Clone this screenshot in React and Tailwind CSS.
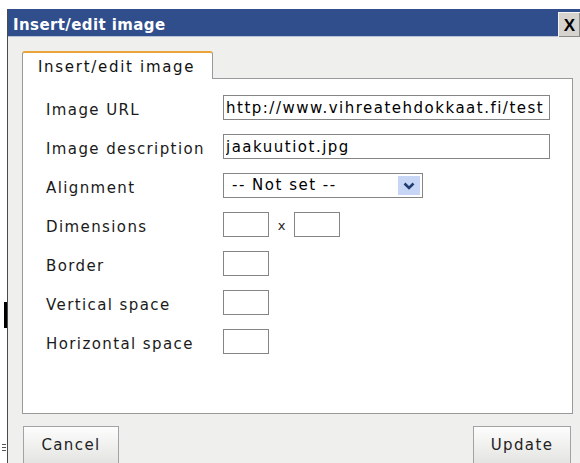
import React, { useState } from 'react';

const label = "h-[25px] pt-[5px] leading-[20px] font-['DejaVu_Sans',sans-serif] text-[15px] tracking-[1.4px] text-[#1a1a1a]";
const box = "h-[25px] border border-[#858585] bg-white";

const Field = ({ value, onChange, className }) => (
    <input
        type="text"
        value={value}
        onChange={(e) => onChange(e.target.value)}
        className={`${box} ${className} px-[2px] font-['DejaVu_Sans',sans-serif] text-[15px] tracking-[1.5px] text-black outline-none`}
    />
);

const App = () => {
    const [src, setSrc] = useState('http://www.vihreatehdokkaat.fi/test');
    const [alt, setAlt] = useState('jaakuutiot.jpg');
    const [width, setWidth] = useState('');
    const [height, setHeight] = useState('');
    const [border, setBorder] = useState('');
    const [vspace, setVspace] = useState('');
    const [hspace, setHspace] = useState('');

    return (
        <div className="flex h-[463px] w-[580px] overflow-hidden bg-white">
            {/* strip of the page behind the popup */}
            <div className="relative w-[7px]">
                <div className="absolute left-[4px] top-[302px] h-[26px] w-[3px] bg-black" />
                <div className="absolute left-[2px] top-[444px] h-px w-[4px] bg-[#555]" />
                <div className="absolute left-[2px] top-[447px] h-px w-[4px] bg-[#555]" />
                <div className="absolute left-[2px] top-[450px] h-px w-[4px] bg-[#555]" />
            </div>

            <div className="flex flex-1 flex-col pt-[9px]">
                <div className="flex flex-1 flex-col border-l border-[#4a4a4a] bg-[#efefed]">
                    {/* title bar */}
                    <div className="flex h-[28px] items-start justify-between border-b border-[#b9c3d6] bg-[#304e8c]">
                        <span className="mt-[5px] pl-[5px] font-['DejaVu_Sans',sans-serif] text-[15px] font-bold tracking-[0.4px] text-white">
                            Insert/edit image
                        </span>
                        <button
                            type="button"
                            className="mt-[3px] flex h-[25px] w-[22px] items-center justify-center border-l border-t border-[#f4f4f2] bg-[#d6d3ce] font-['Liberation_Sans',sans-serif] text-[17px] font-bold leading-none text-black shadow-[inset_-1px_-1px_0_#8a8a86]"
                        >
                            X
                        </button>
                    </div>

                    <div className="flex flex-1 flex-col pl-[14px] pr-[7px]">
                        {/* tab */}
                        <div className="relative z-10 -mb-px mt-[14px] flex h-[28px] w-[191px] items-center rounded-t-[3px] border-x border-t-2 border-[#9a9a9a] border-t-[#eaa53a] bg-white pl-[15px] pt-[3px]">
                            <span className="font-['DejaVu_Sans',sans-serif] text-[15px] tracking-[1.7px] text-[#111]">
                                Insert/edit image
                            </span>
                        </div>

                        {/* panel */}
                        <div className="h-[336px] border border-[#9a9a9a] bg-white pl-[23px] pt-[16px]">
                            <div className="grid grid-cols-[177px_1fr] items-center gap-y-[14px]">
                                <span className={label}>Image URL</span>
                                <Field value={src} onChange={setSrc} className="w-[327px]" />

                                <span className={label}>Image description</span>
                                <Field value={alt} onChange={setAlt} className="w-[327px]" />

                                <span className={label}>Alignment</span>
                                <div className={`${box} flex w-[200px] items-center justify-between pl-[8px] pr-[2px]`}>
                                    <span className="font-['DejaVu_Sans',sans-serif] text-[15px] tracking-[1.5px] text-black">
                                        -- Not set --
                                    </span>
                                    <span className="flex h-[19px] w-[22px] items-center justify-center bg-[#c6d6f4]">
                                        <svg width="12" height="8" viewBox="0 0 12 8">
                                            <polyline points="1.5,1.5 6,6 10.5,1.5" fill="none" stroke="#203e74" strokeWidth="2.6" />
                                        </svg>
                                    </span>
                                </div>

                                <span className={label}>Dimensions</span>
                                <div className="flex h-[25px] items-center">
                                    <Field value={width} onChange={setWidth} className="w-[46px]" />
                                    <span className="w-[25px] pt-[3px] text-center font-['DejaVu_Sans',sans-serif] text-[13px] leading-[18px] text-[#222]">x</span>
                                    <Field value={height} onChange={setHeight} className="w-[46px]" />
                                </div>

                                <span className={label}>Border</span>
                                <Field value={border} onChange={setBorder} className="w-[46px]" />

                                <span className={label}>Vertical space</span>
                                <Field value={vspace} onChange={setVspace} className="w-[46px]" />

                                <span className={label}>Horizontal space</span>
                                <Field value={hspace} onChange={setHspace} className="w-[46px]" />
                            </div>
                        </div>

                        {/* actions */}
                        <div className="mt-[12px] flex justify-between pl-px pr-[2px]">
                            <button
                                type="button"
                                className="h-[38px] w-[96px] border border-[#a3a3a3] bg-gradient-to-b from-[#fdfdfd] to-[#e4e4e2] font-['DejaVu_Sans',sans-serif] text-[15px] tracking-[1.4px] text-[#222]"
                            >
                                Cancel
                            </button>
                            <button
                                type="button"
                                className="h-[38px] w-[98px] border border-[#a3a3a3] bg-gradient-to-b from-[#fdfdfd] to-[#e4e4e2] font-['DejaVu_Sans',sans-serif] text-[15px] tracking-[1.4px] text-[#222]"
                            >
                                Update
                            </button>
                        </div>
                    </div>
                </div>
            </div>
        </div>
    );
};

export default App;
